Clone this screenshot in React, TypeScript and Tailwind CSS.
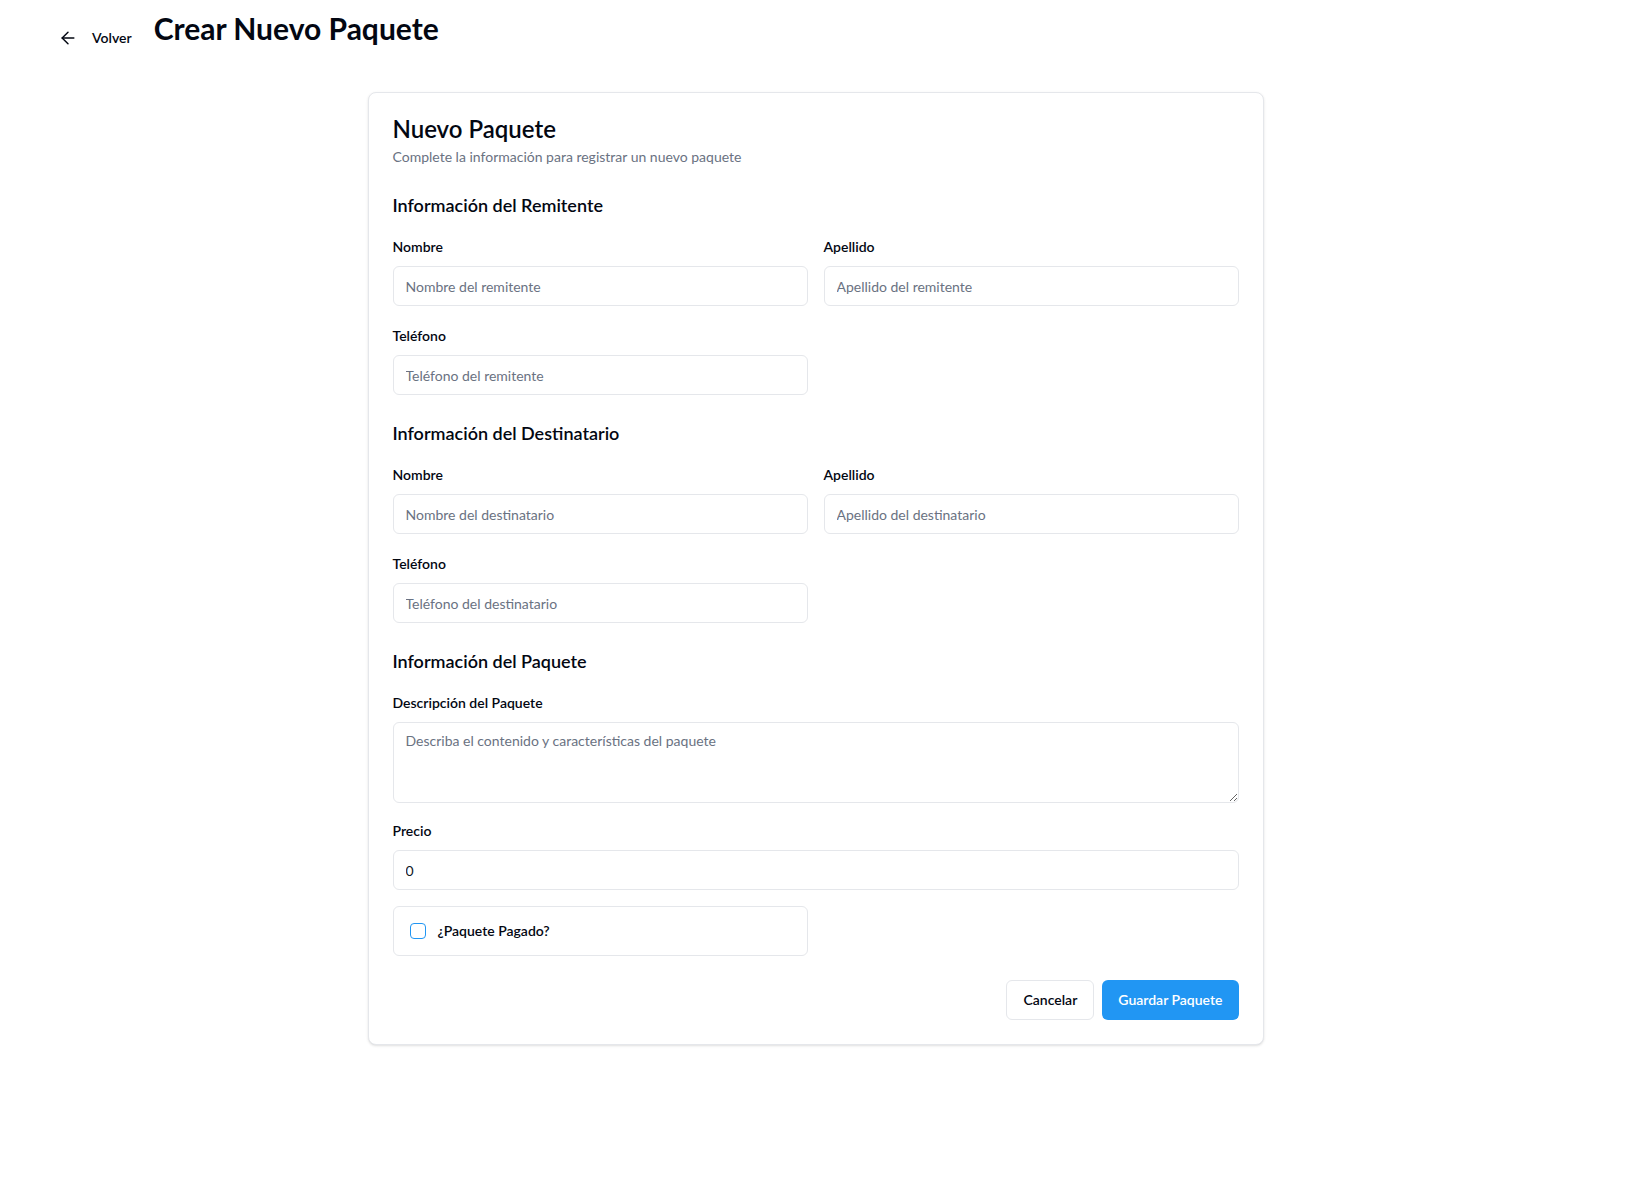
import { ArrowLeft } from 'lucide-react';

const inputCls =
  'h-10 w-full rounded-md border border-gray-200 bg-white px-3 text-sm text-gray-900 placeholder:text-gray-500 outline-none';

function Field({ label, placeholder }: { label: string; placeholder: string }) {
  return (
    <div>
      <label className="block text-sm font-semibold text-gray-950 mb-[9px]">{label}</label>
      <input className={inputCls} placeholder={placeholder} />
    </div>
  );
}

function PersonSection({ title, who }: { title: string; who: string }) {
  return (
    <section>
      <h3 className="text-lg font-semibold text-gray-950 leading-7 mb-[18px]">{title}</h3>
      <div className="grid grid-cols-2 gap-x-4 gap-y-5">
        <Field label="Nombre" placeholder={`Nombre del ${who}`} />
        <Field label="Apellido" placeholder={`Apellido del ${who}`} />
        <Field label="Teléfono" placeholder={`Teléfono del ${who}`} />
      </div>
    </section>
  );
}

export default function App() {
  return (
    <div className="w-[1631px] min-h-screen bg-white text-gray-950 font-['Lato','Noto_Sans',sans-serif]">
      <header className="flex items-start pl-[42px] pt-[10px]">
        <button className="mt-[8px] h-10 px-4 flex items-center gap-[14px] text-sm font-semibold rounded-md">
          <ArrowLeft size={20} strokeWidth={1.75} />
          Volver
        </button>
        <h1 className="ml-[6px] text-3xl font-bold leading-9">Crear Nuevo Paquete</h1>
      </header>

      <div className="mx-auto mt-[34px] w-[896px] rounded-lg border border-gray-200 bg-white p-6 shadow-sm">
        <h2 className="text-2xl font-semibold leading-6">Nuevo Paquete</h2>
        <p className="mt-1.5 text-sm leading-5 text-gray-500">
          Complete la información para registrar un nuevo paquete
        </p>

        <div className="mt-6 space-y-6">
          <PersonSection title="Información del Remitente" who="remitente" />
          <PersonSection title="Información del Destinatario" who="destinatario" />

          <section>
            <h3 className="text-lg font-semibold leading-7 mb-[18px]">Información del Paquete</h3>
            <div className="flex flex-col gap-[18px]">
              <div>
                <label className="block text-sm font-semibold mb-[9px]">Descripción del Paquete</label>
                <textarea
                  className="block h-[81px] w-full rounded-md border border-gray-200 px-3 py-2 text-sm placeholder:text-gray-500 outline-none"
                  placeholder="Describa el contenido y características del paquete"
                />
              </div>
              <div>
                <label className="block text-sm font-semibold mb-[9px]">Precio</label>
                <input className={inputCls} defaultValue="0" type="number" />
              </div>
              <div className="-mt-0.5 grid grid-cols-2 gap-4">
                <label className="flex items-center gap-3 rounded-md border border-gray-200 p-4">
                  <span className="h-4 w-4 rounded-[4px] border border-[#2196f3] bg-white" />
                  <span className="text-sm font-semibold leading-4">¿Paquete Pagado?</span>
                </label>
              </div>
            </div>
          </section>

          <div className="flex justify-end gap-2">
            <button className="h-10 rounded-md border border-gray-200 bg-white px-4 text-sm font-semibold">
              Cancelar
            </button>
            <button className="h-10 rounded-md bg-[#2196f3] px-4 text-sm font-semibold text-white">
              Guardar Paquete
            </button>
          </div>
        </div>
      </div>
    </div>
  );
}
